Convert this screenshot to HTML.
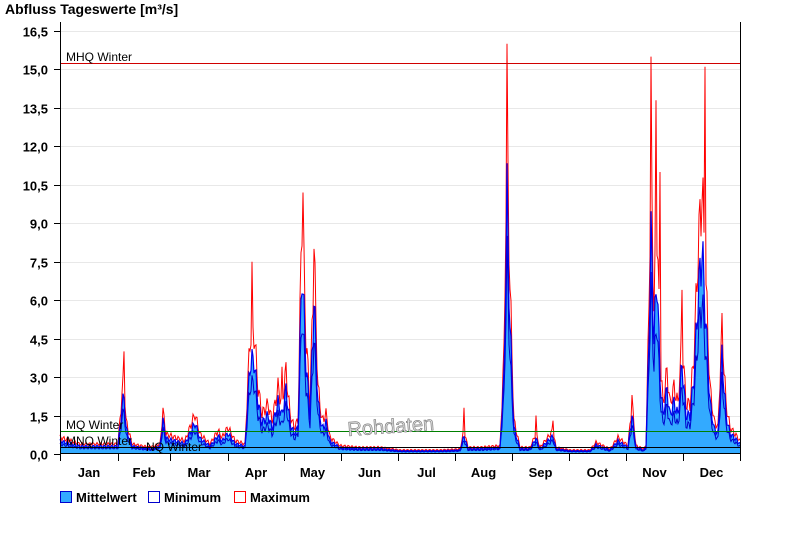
<!DOCTYPE html><html><head><meta charset="utf-8"><style>
body{margin:0;background:#fff;width:800px;height:550px;overflow:hidden;font-family:"Liberation Sans",Arial,sans-serif}
svg text{font-family:"Liberation Sans",Arial,sans-serif}
</style></head><body>
<svg id="s" width="800" height="550" xmlns="http://www.w3.org/2000/svg">
<text x="5" y="14" font-size="14" font-weight="bold">Abfluss Tageswerte [m³/s]</text>
<g id="grid" stroke="#e8e8e8" stroke-width="1"></g>
<g id="data"></g>
<line x1="60" y1="63.5" x2="740" y2="63.5" stroke="#d00000"/>
<text x="66" y="61" font-size="12">MHQ Winter</text>
<line x1="60" y1="431.5" x2="740" y2="431.5" stroke="#008000"/>
<line x1="60" y1="447.5" x2="740" y2="447.5" stroke="#000"/>
<text x="66" y="429" font-size="12">MQ Winter</text>
<text x="66" y="445" font-size="12">MNQ Winter</text>
<text x="146" y="451" font-size="12">NQ Winter</text>
<text x="348" y="436" font-size="20" fill="#ddd" stroke="#777" stroke-width="0.6" transform="rotate(-4 348 436)">Rohdaten</text>
<line x1="60.5" y1="22" x2="60.5" y2="454" stroke="#000"/>
<line x1="740.5" y1="22" x2="740.5" y2="454" stroke="#000"/>
<line x1="60" y1="453.5" x2="741" y2="453.5" stroke="#000"/>
<g id="ax" font-size="13" font-weight="bold"></g>
<rect x="60.5" y="491.5" width="11" height="11" fill="#33aaff" stroke="#0000cc"/>
<text x="76" y="502" font-size="13" font-weight="bold">Mittelwert</text>
<rect x="148.5" y="491.5" width="11" height="11" fill="#fff" stroke="#0000cc"/>
<text x="164" y="502" font-size="13" font-weight="bold">Minimum</text>
<rect x="234.5" y="491.5" width="11" height="11" fill="#fff" stroke="#ff0000"/>
<text x="250" y="502" font-size="13" font-weight="bold">Maximum</text>
</svg>
<script>
var NS="http://www.w3.org/2000/svg";
function el(p,t,a,tx){var e=document.createElementNS(NS,t);for(var k in a)e.setAttribute(k,a[k]);if(tx)e.textContent=tx;p.appendChild(e);return e;}
var Y=function(v){return 454-v*25.64;};
var g=document.getElementById('grid'),ax=document.getElementById('ax');
for(var i=0;i<=11;i++){var v=i*1.5,y=Math.round(Y(v))+.5;
 if(i>0)el(g,'line',{x1:61,x2:740,y1:y,y2:y});
 el(ax,'line',{x1:54,x2:60,y1:y,y2:y,stroke:'#000'});
 el(ax,'text',{x:48,y:y+5,'text-anchor':'end'},v.toFixed(1).replace('.',','));}
var mt=[60,118,170,228,284,341,398,455,512,569,626,683,740],mn=['Jan','Feb','Mar','Apr','May','Jun','Jul','Aug','Sep','Oct','Nov','Dec'];
for(i=0;i<13;i++){el(ax,'line',{x1:mt[i]+.5,x2:mt[i]+.5,y1:454,y2:461,stroke:'#000'});
 if(i<12)el(ax,'text',{x:(mt[i]+mt[i+1])/2,y:477,'text-anchor':'middle'},mn[i]);}
var k=[60,.5,70,.4,80,.3,100,.3,118,.3,122,1.8,124,2.3,126,1.0,132,.3,150,.2,160,.3,163,1.3,166,.6,175,.5,185,.4,195,1.2,200,.6,210,.3,218,.7,222,.5,228,.8,235,.4,245,.3,250,3.5,254,3.7,258,2.0,262,1.2,268,1.5,272,1.0,278,2.0,282,1.5,286,2.5,290,1.2,294,.8,298,1.0,302,7.3,306,3.5,310,1.5,314,6.0,318,2.0,322,1.0,326,1.2,330,.5,340,.25,360,.2,380,.2,400,.12,440,.12,460,.15,464,.7,468,.2,480,.2,500,.25,504,3,507,10,510,5,514,1,520,.2,530,.2,536,.6,540,.2,553,.7,556,.2,570,.12,590,.12,596,.35,610,.15,618,.5,628,.25,632,1.5,636,.25,644,.15,646,.3,648,3.0,651,8.5,654,4.5,657,7.0,660,3.0,663,1.5,667,2.5,670,1.5,674,2.0,678,1.5,682,3.5,686,1.5,690,1.5,694,3.0,698,6.0,702,8.0,706,5.0,710,2.0,714,1.0,718,.8,722,3.8,726,1.5,730,.8,740,.4];
var sp={124:4.0,163:1.8,252:7.5,282:3.4,303:10.2,314:8.0,464:1.8,507:16.0,536:1.5,553:1.3,632:2.3,651:15.5,656:13.8,660:11,682:6.4,705:15.1,722:5.5};
function mean(x){for(var j=0;j<k.length-2;j+=2){if(x>=k[j]&&x<=k[j+2]){var t=(x-k[j])/(k[j+2]-k[j]);return k[j+1]+(k[j+3]-k[j+1])*t;}}return .4;}
var d=document.getElementById('data'),fp='M60,454',mp='',np='',xp='';
for(var x=60;x<=740;x++){var m=mean(x)*(1+0.15*Math.sin(x*1.7));var mx=m*1.3;if(sp[x])mx=sp[x];
 var mi=m*0.75;
 fp+=' L'+x+','+Y(m).toFixed(1);mp+=(x==60?'M':' L')+x+','+Y(m).toFixed(1);
 np+=(x==60?'M':' L')+x+','+Y(mi).toFixed(1);xp+=(x==60?'M':' L')+x+','+Y(mx).toFixed(1);}
fp+=' L740,454 Z';
el(d,'path',{d:fp,fill:'#33aaff'});
el(d,'path',{d:xp,fill:'none',stroke:'#ff0000','stroke-width':1});
el(d,'path',{d:np,fill:'none',stroke:'#0000cc','stroke-width':1});
el(d,'path',{d:mp,fill:'none',stroke:'#0000ee','stroke-width':1.2});
</script>
</body></html>
